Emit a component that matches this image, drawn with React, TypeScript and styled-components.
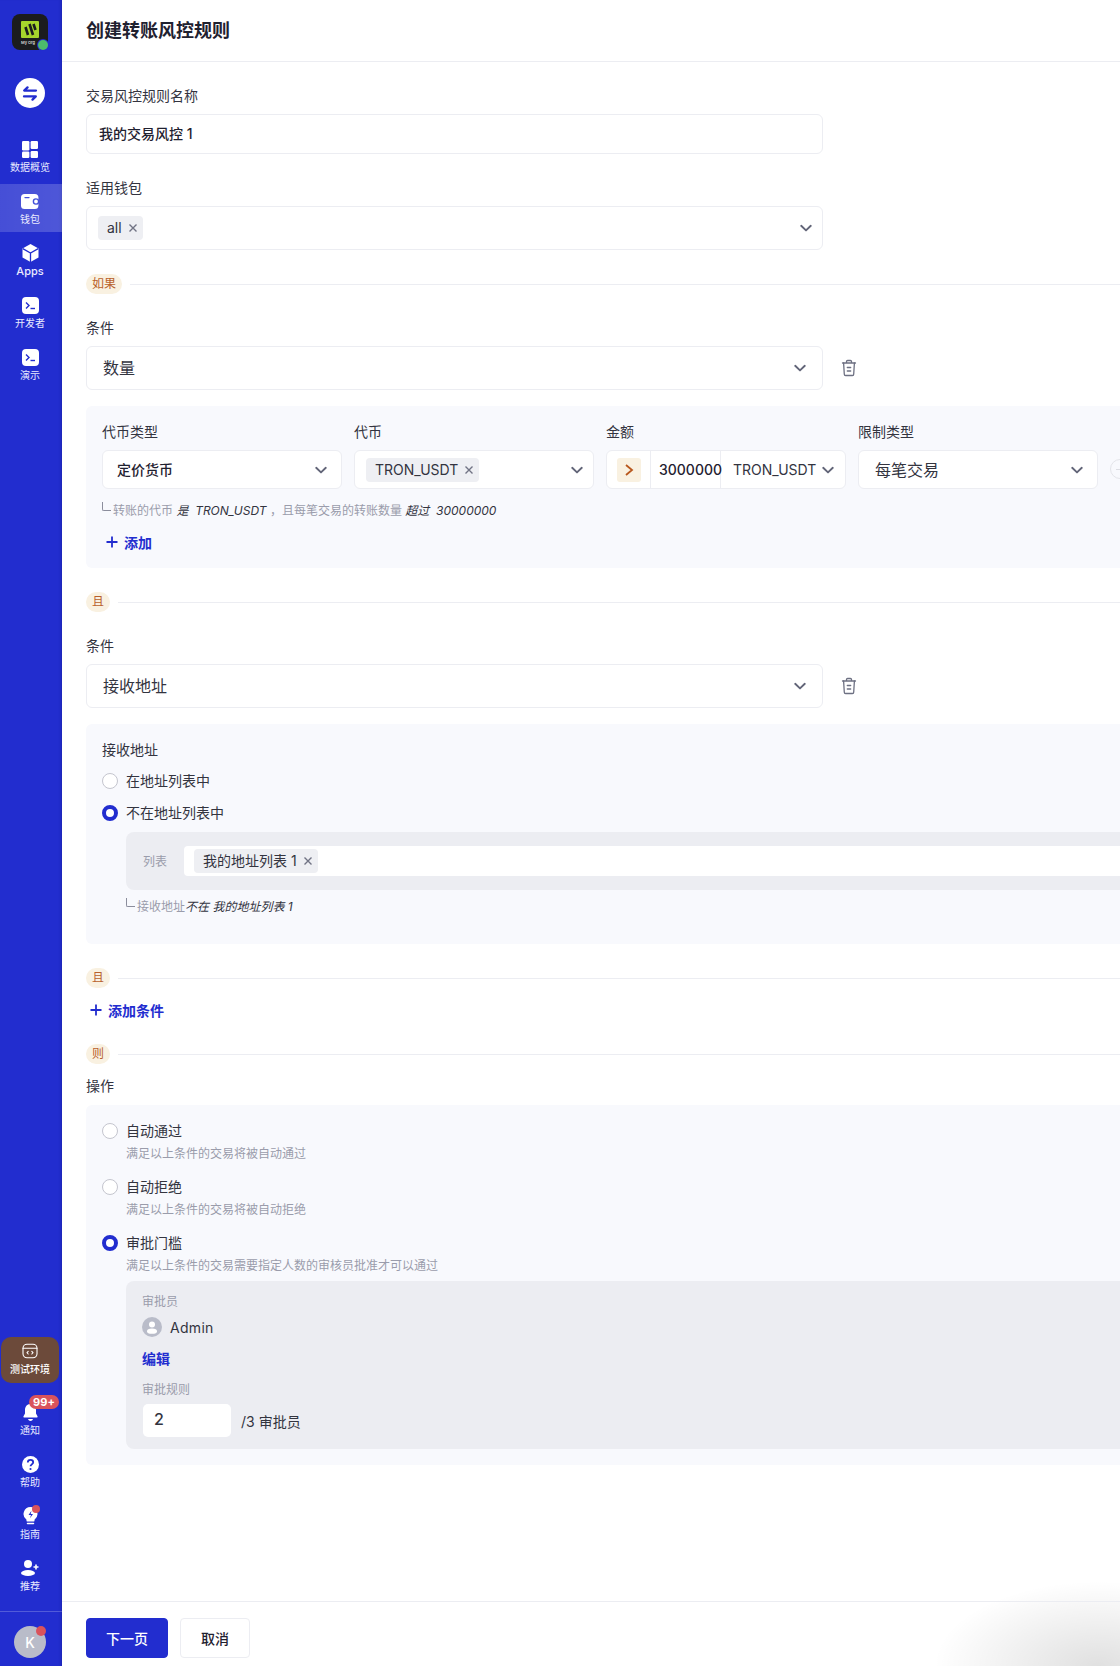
import React from "react";
import styled, { createGlobalStyle } from "styled-components";

const Global = createGlobalStyle`
  html, body { margin: 0; padding: 0; background: #fff; }
  body { font-family: Inter, "Noto Sans CJK SC", "Noto Sans", sans-serif; color: #1f2130; }
  * { box-sizing: border-box; }
`;

const BLUE = "#222dcf";

const Page = styled.div`
  display: flex;
  width: 1120px;
  height: 1666px;
  overflow: hidden;
`;
const Sidebar = styled.aside`
  width: 62px;
  flex-shrink: 0;
  height: 100%;
  background: ${BLUE};
  box-shadow: inset -3px 0 3px -2px rgba(10, 15, 90, 0.25);
  display: flex;
  flex-direction: column;
  align-items: center;
  padding-top: 14px;
  padding-bottom: 8px;
`;
const Logo = styled.div`
  position: relative;
  width: 36px;
  height: 36px;
  margin-right: 2px;
  border-radius: 8px;
  background: #1b1c1e;
  display: flex;
  flex-direction: column;
  align-items: center;
  padding-top: 7px;
`;
const LogoMark = styled.div`
  width: 18px;
  height: 17px;
  border-radius: 1px;
  background: #a6d52c;
  display: flex;
`;
const LogoText = styled.span`
  font-size: 4px;
  line-height: 6px;
  margin-top: 2px;
  margin-right: 4px;
  color: #d8d8d8;
  font-weight: 600;
  white-space: nowrap;
`;
const LogoDot = styled.span`
  position: absolute;
  right: 0;
  bottom: 0;
  width: 10px;
  height: 10px;
  border-radius: 50%;
  background: #4cbb6c;
  box-shadow: 0 0 0 1px ${BLUE};
`;
const SwapCircle = styled.div`
  width: 30px;
  height: 30px;
  margin: 28px 2px 24px 0;
  border-radius: 50%;
  background: #fff;
  display: flex;
  align-items: center;
  justify-content: center;
`;
const NavList = styled.nav`
  display: flex;
  flex-direction: column;
  gap: 4px;
  width: 100%;
`;
const NavItem = styled.div<{ $active?: boolean }>`
  width: 100%;
  height: 48px;
  display: flex;
  flex-direction: column;
  align-items: center;
  padding: 7px 2px 0 0;
  background: ${(p) =>
    p.$active ? "linear-gradient(90deg, rgba(255,255,255,.16), rgba(255,255,255,.2))" : "transparent"};
`;
const NavIcon = styled.span`
  position: relative;
  width: 20px;
  height: 20px;
  display: flex;
  align-items: center;
  justify-content: center;
`;
const NavLabel = styled.span<{ $latin?: boolean }>`
  font-size: ${(p) => (p.$latin ? "11px" : "10px")};
  line-height: 14px;
  margin-top: 1px;
  color: #e9eaff;
  font-weight: ${(p) => (p.$latin ? 500 : 400)};
  white-space: nowrap;
`;
const Spacer = styled.div`
  flex: 1;
`;
const TestBox = styled.div`
  width: 58px;
  height: 46px;
  margin-right: 2px;
  margin-bottom: 12px;
  border-radius: 10px;
  background: #6c4a3a;
  display: flex;
  flex-direction: column;
  align-items: center;
  padding-top: 4px;
`;
const TestLabel = styled.span`
  font-size: 10px;
  line-height: 14px;
  margin-top: 1px;
  color: #fff;
  font-weight: 500;
  white-space: nowrap;
`;
const CountBadge = styled.span`
  position: absolute;
  left: 9px;
  top: -7px;
  width: 30px;
  height: 14px;
  border-radius: 7px;
  background: #d9535c;
  color: #fff;
  font-size: 11px;
  line-height: 14px;
  font-weight: 700;
  text-align: center;
  white-space: nowrap;
`;
const RedDot = styled.span`
  position: absolute;
  right: 0;
  top: -1px;
  width: 8px;
  height: 8px;
  border-radius: 50%;
  background: #d9535c;
`;
const SideDivider = styled.div`
  width: 100%;
  height: 1px;
  background: rgba(255, 255, 255, 0.22);
  margin-top: 12px;
  margin-bottom: 14px;
`;
const UserAvatar = styled.div`
  position: relative;
  width: 32px;
  height: 32px;
  margin-right: 2px;
  border-radius: 50%;
  background: #b9bcc9;
  color: #fff;
  font-size: 14px;
  font-weight: 500;
  display: flex;
  align-items: center;
  justify-content: center;
`;
const UserDot = styled.span`
  position: absolute;
  right: 0;
  top: 0;
  width: 10px;
  height: 10px;
  border-radius: 50%;
  background: #d9535c;
`;

const Main = styled.main`
  flex: 1;
  min-width: 0;
  height: 100%;
  display: flex;
  flex-direction: column;
  background: radial-gradient(ellipse 165px 85px at 98% 100%, rgba(0, 0, 0, 0.12), rgba(0, 0, 0, 0) 100%), #fff;
`;
const Header = styled.header`
  height: 62px;
  flex-shrink: 0;
  border-bottom: 1px solid #ecedf2;
  padding: 0 24px 4px;
  display: flex;
  align-items: center;
  font-size: 18px;
  font-weight: 600;
`;
const Body = styled.div`
  flex: 1;
  overflow: hidden;
  padding: 23px 0 0 24px;
`;
const Form = styled.div`
  width: 1200px;
  display: flex;
  flex-direction: column;
`;
const Label = styled.div<{ $gap?: number; $after?: number }>`
  font-size: 14px;
  line-height: 22px;
  color: #33343f;
  margin-top: ${(p) => p.$gap ?? 0}px;
  margin-bottom: ${(p) => p.$after ?? 7}px;
`;
const FieldRow = styled.div`
  display: flex;
  align-items: center;
`;
const TextBox = styled.div`
  width: 737px;
  height: 40px;
  border: 1px solid #ecedf2;
  border-radius: 6px;
  background: #fff;
  padding: 0 12px 2px;
  display: flex;
  align-items: center;
  font-size: 14px;
  font-weight: 500;
`;
const Select = styled.div<{ $big?: boolean }>`
  position: relative;
  width: 737px;
  height: 44px;
  border: 1px solid #ecedf2;
  border-radius: 6px;
  background: #fff;
  padding: 0 40px ${(p) => (p.$big ? 2 : 0)}px ${(p) => (p.$big ? 16 : 11)}px;
  display: flex;
  align-items: center;
  font-size: 16px;
  color: #33343f;
  flex-shrink: 0;
`;
const Chevron = styled.svg<{ $right: number }>`
  position: absolute;
  right: ${(p) => p.$right}px;
  top: 50%;
  margin-top: -8px;
  width: 16px;
  height: 16px;
`;
const Chip = styled.span`
  display: inline-flex;
  align-items: center;
  gap: 6px;
  height: 24px;
  padding: 0 5px 0 9px;
  border-radius: 4px;
  background: #eeeff3;
  font-size: 14px;
  line-height: 24px;
  color: #33343f;
  white-space: nowrap;
`;
const TrashButton = styled.span`
  width: 16px;
  height: 18px;
  margin-left: 18px;
  display: flex;
`;
const RuleRow = styled.div<{ $top: number; $bottom: number }>`
  display: flex;
  align-items: center;
  gap: 8px;
  height: 20px;
  margin-top: ${(p) => p.$top}px;
  margin-bottom: ${(p) => p.$bottom}px;
`;
const RuleBadge = styled.span`
  min-width: 24px;
  height: 20px;
  padding: 0 6px;
  border-radius: 10px;
  background: #f9f1e1;
  color: #b8602b;
  font-size: 12px;
  line-height: 20px;
  text-align: center;
`;
const RuleLine = styled.span`
  flex: 1;
  height: 1px;
  background: #ecedf2;
`;
const Block = styled.section<{ $top: number; $h: number }>`
  margin-top: ${(p) => p.$top}px;
  min-height: ${(p) => p.$h}px;
  border-radius: 6px;
  background: #f8f9fd;
  padding: 15px 16px 0;
  display: flex;
  flex-direction: column;
`;
const Columns = styled.div`
  display: flex;
  gap: 12px;
  align-items: flex-start;
`;
const Column = styled.div`
  width: 240px;
  flex-shrink: 0;
`;
const ColumnSelect = styled(Select)<{ $large?: boolean }>`
  width: 100%;
  height: 39px;
  font-size: ${(p) => (p.$large ? 16 : 14)}px;
  padding-left: ${(p) => (p.$large ? 16 : 14)}px;
  padding-bottom: 2px;
`;
const ChipSelect = styled(Select)`
  width: 100%;
  height: 39px;
  font-size: 14px;
`;
const StrongValue = styled.span`
  font-weight: 500;
  color: #1f2130;
`;
const AmountBox = styled.div`
  width: 100%;
  height: 39px;
  border: 1px solid #ecedf2;
  border-radius: 6px;
  background: #fff;
  display: flex;
  align-items: stretch;
  font-size: 14px;
`;
const OpCell = styled.div`
  width: 44px;
  flex-shrink: 0;
  border-right: 1px solid #ecedf2;
  display: flex;
  align-items: center;
  justify-content: center;
`;
const OpTile = styled.span`
  width: 24px;
  height: 24px;
  border-radius: 3px;
  background: #f9f1e1;
  display: flex;
  align-items: center;
  justify-content: center;
`;
const AmountValue = styled.div`
  width: 70px;
  flex-shrink: 0;
  padding-left: 8px;
  border-right: 1px solid #ecedf2;
  line-height: 37px;
  font-weight: 500;
  white-space: nowrap;
`;
const UnitCell = styled.div`
  position: relative;
  flex: 1;
  padding-left: 12px;
  line-height: 37px;
  color: #33343f;
  white-space: nowrap;
`;
const MinusCircle = styled.span`
  width: 20px;
  height: 20px;
  margin-top: 38px;
  border-radius: 50%;
  border: 1px solid #e4e5ea;
  flex-shrink: 0;
  display: flex;
  align-items: center;
  justify-content: center;
  &::after {
    content: "";
    width: 8px;
    height: 1px;
    background: #dcdde3;
  }
`;
const Hint = styled.div<{ $top: number; $indent?: number }>`
  display: flex;
  align-items: center;
  font-size: 12px;
  line-height: 18px;
  color: #9a9cab;
  margin-top: ${(p) => p.$top}px;
  margin-left: ${(p) => p.$indent ?? 0}px;
  white-space: pre;
`;
const Elbow = styled.span`
  width: 9px;
  height: 9px;
  margin-right: 2px;
  margin-top: -9px;
  border-left: 1px solid #8b8d9c;
  border-bottom: 1px solid #8b8d9c;
  border-bottom-left-radius: 2px;
`;
const Em = styled.em`
  color: #33343f;
  font-style: italic;
`;
const AddLink = styled.div<{ $top: number; $bottom?: number }>`
  display: flex;
  align-items: center;
  gap: 6px;
  height: 22px;
  padding-bottom: 1px;
  margin-top: ${(p) => p.$top}px;
  margin-bottom: ${(p) => p.$bottom ?? 0}px;
  margin-left: 4px;
  color: ${BLUE};
  font-size: 14px;
  font-weight: 600;
`;
const RadioRow = styled.div<{ $top?: number }>`
  display: flex;
  align-items: center;
  gap: 8px;
  height: 22px;
  padding-bottom: 2px;
  margin-top: ${(p) => p.$top ?? 0}px;
  font-size: 14px;
  color: #33343f;
`;
const Radio = styled.span<{ $on?: boolean }>`
  width: 16px;
  height: 16px;
  border-radius: 50%;
  background: #fff;
  border: ${(p) => (p.$on ? `4.5px solid ${BLUE}` : "1px solid #c4c5ce")};
  flex-shrink: 0;
  margin-top: 1px;
`;
const OptionDesc = styled.div`
  font-size: 12px;
  line-height: 18px;
  color: #9a9cab;
  margin: 3px 0 13px 24px;
`;
const SubPanel = styled.div`
  margin-left: 24px;
  border-radius: 8px;
  background: #ecedf2;
`;
const ListPanel = styled(SubPanel)`
  margin-top: 8px;
  height: 58px;
  padding: 14px 0 14px 17px;
  display: flex;
  align-items: center;
  gap: 17px;
`;
const ListLabel = styled.span`
  font-size: 12px;
  color: #9a9cab;
  margin-bottom: 2px;
  white-space: nowrap;
`;
const ListInput = styled.div`
  flex: 1;
  height: 30px;
  border-radius: 4px;
  background: #fff;
  padding-left: 10px;
  display: flex;
  align-items: center;
`;
const ApprovalPanel = styled(SubPanel)`
  margin-top: -7px;
  height: 168px;
  padding: 12px 16px;
  display: flex;
  flex-direction: column;
`;
const MutedLabel = styled.div`
  font-size: 12px;
  line-height: 18px;
  color: #9a9cab;
`;
const ApproverRow = styled.div`
  display: flex;
  align-items: center;
  gap: 8px;
  height: 20px;
  margin-top: 6px;
  font-size: 14px;
  letter-spacing: 0.3px;
  color: #33343f;
`;
const EditLink = styled.div`
  height: 22px;
  line-height: 22px;
  margin-top: 11px;
  margin-bottom: 11px;
  color: ${BLUE};
  font-size: 14px;
  font-weight: 600;
`;
const CountRow = styled.div`
  display: flex;
  align-items: center;
  gap: 10px;
  margin-top: 5px;
  margin-left: 1px;
  font-size: 14px;
  color: #33343f;
`;
const CountInput = styled.div`
  width: 88px;
  height: 33px;
  border-radius: 5px;
  background: #fff;
  padding-left: 11px;
  font-size: 16px;
  font-weight: 500;
  line-height: 31px;
`;
const Footer = styled.footer`
  height: 65px;
  flex-shrink: 0;
  border-top: 1px solid #ecedf2;
  padding: 16px 24px 0;
  display: flex;
  gap: 12px;
  align-items: flex-start;
`;
const Button = styled.button<{ $primary?: boolean }>`
  height: 40px;
  width: ${(p) => (p.$primary ? 82 : 70)}px;
  border-radius: 4px;
  border: 1px solid ${(p) => (p.$primary ? BLUE : "#ecedf2")};
  background: ${(p) => (p.$primary ? BLUE : "#fff")};
  color: ${(p) => (p.$primary ? "#fff" : "#1f2130")};
  font-family: inherit;
  font-size: 14px;
  font-weight: 500;
  padding: 0;
`;

const ChevronIcon = ({ right = 8 }: { right?: number }) => (
  <Chevron $right={right} viewBox="0 0 16 16" fill="none" stroke="#626578" strokeWidth="1.9" strokeLinecap="round" strokeLinejoin="round">
    <path d="M3.2 5.8 8 10.4 12.8 5.8" />
  </Chevron>
);
const CloseIcon = () => (
  <svg width="10" height="10" viewBox="0 0 10 10" fill="none" stroke="#707384" strokeWidth="1.4">
    <path d="M1.5 1.5 8.5 8.5M8.5 1.5 1.5 8.5" />
  </svg>
);
const TrashIcon = () => (
  <svg width="16" height="18" viewBox="0 0 16 18" fill="none" stroke="#6d7082" strokeWidth="1.3" strokeLinecap="round" strokeLinejoin="round">
    <path d="M1.5 4h13M5.5 4V2.6c0-.6.5-1.1 1.1-1.1h2.8c.6 0 1.1.5 1.1 1.1V4" />
    <path d="M2.6 4l.7 11.2c0 .8.6 1.3 1.3 1.3h6.8c.7 0 1.3-.5 1.3-1.3L13.4 4" />
    <path d="M6.3 8.5h3.4M6.3 12h3.4" />
  </svg>
);
const PlusIcon = () => (
  <svg width="12" height="12" viewBox="0 0 12 12" fill="none" stroke={BLUE} strokeWidth="1.8">
    <path d="M6 .5v11M.5 6h11" />
  </svg>
);
const TerminalIcon = () => (
  <svg width="17" height="17" viewBox="0 0 17 17">
    <rect width="17" height="17" rx="4" fill="#fff" />
    <path d="M4 5.5 7 8.5 4 11.5" fill="none" stroke={BLUE} strokeWidth="1.4" />
    <path d="M8.5 11.5h4.5" stroke={BLUE} strokeWidth="1.4" />
  </svg>
);

const navTop = [
  {
    label: "数据概览",
    icon: (
      <svg width="16" height="17" viewBox="0 0 16 17" fill="#fff">
        <rect x="0" y="0" width="7.4" height="9.5" rx="1.2" />
        <rect x="0" y="10.5" width="7.4" height="6.5" rx="1.2" />
        <rect x="8.6" y="0" width="7.4" height="8" rx="1.2" />
        <rect x="8.6" y="10" width="7.4" height="7" rx="1.2" />
      </svg>
    ),
  },
  {
    label: "钱包",
    active: true,
    icon: (
      <svg width="18" height="15" viewBox="0 0 18 15">
        <rect width="17.4" height="15" rx="3.5" fill="#fff" />
        <path d="M4 3.6h4" stroke="#4350d9" strokeWidth="1.4" strokeLinecap="round" />
        <circle cx="15" cy="7.5" r="2.6" fill="#fff" stroke="#4350d9" strokeWidth="1.4" />
      </svg>
    ),
  },
  {
    label: "Apps",
    latin: true,
    icon: (
      <svg width="17" height="18" viewBox="0 0 17 18">
        <path d="M8.5 0 16.5 4.4V13.4L8.5 18 .5 13.4V4.4Z" fill="#fff" />
        <path d="M.8 4.6 8.5 9l7.7-4.4M8.5 9v9" fill="none" stroke={BLUE} strokeWidth="1.3" />
      </svg>
    ),
  },
  { label: "开发者", icon: <TerminalIcon /> },
  { label: "演示", icon: <TerminalIcon /> },
];

export default function App() {
  return (
    <Page>
      <Global />
      <Sidebar>
        <Logo>
          <LogoMark>
            <svg width="18" height="17" viewBox="0 0 18 17" fill="none" stroke="#1b1c1e" strokeWidth="2.6">
              <path d="M4.5 6 7 14M8.5 3 12 14M12.5 3 14.5 9" />
            </svg>
          </LogoMark>
          <LogoText>My Org</LogoText>
          <LogoDot />
        </Logo>
        <SwapCircle>
          <svg width="16" height="15" viewBox="0 0 16 15" fill="none" stroke={BLUE} strokeWidth="2.3" strokeLinecap="round" strokeLinejoin="round">
            <path d="M14 4.6H2.2L5.5 1.4M2 10.4h11.8L10.5 13.6" />
          </svg>
        </SwapCircle>
        <NavList>
          {navTop.map((n) => (
            <NavItem key={n.label} $active={n.active}>
              <NavIcon>{n.icon}</NavIcon>
              <NavLabel $latin={n.latin}>{n.label}</NavLabel>
            </NavItem>
          ))}
        </NavList>
        <Spacer />
        <TestBox>
          <NavIcon>
            <svg width="16" height="16" viewBox="0 0 16 16" fill="none" stroke="#fff" strokeWidth="1.1" strokeLinecap="round" strokeLinejoin="round">
              <rect x="1" y="1.2" width="14" height="13.6" rx="4" />
              <path d="M1 5.2h14M6.2 8.3 5 9.7l1.2 1.3M9.8 8.3 11 9.7 9.8 11" />
            </svg>
          </NavIcon>
          <TestLabel>测试环境</TestLabel>
        </TestBox>
        <NavList>
          <NavItem>
            <NavIcon>
              <svg width="15" height="17" viewBox="0 0 15 17" fill="#fff">
                <path d="M7.5 0C4 0 2 2.7 2 6v3.5L.5 12.2c-.3.6 0 1.3.8 1.3h12.4c.8 0 1.100-.7.800-1.300L13 9.500V6c0-3.300-2-6-5.500-6Z" />
                <path d="M5 15h5c-.4 1.200-1.400 2-2.500 2S5.400 16.200 5 15Z" />
              </svg>
              <CountBadge>99+</CountBadge>
            </NavIcon>
            <NavLabel>通知</NavLabel>
          </NavItem>
          <NavItem>
            <NavIcon>
              <svg width="17" height="17" viewBox="0 0 17 17">
                <circle cx="8.5" cy="8.5" r="8.5" fill="#fff" />
                <path d="M5.8 6.4c0-1.500 1.200-2.500 2.700-2.500s2.700 1 2.700 2.400c0 2-2.700 2.100-2.700 4" fill="none" stroke={BLUE} strokeWidth="1.8" />
                <circle cx="8.5" cy="13" r="1.1" fill={BLUE} />
              </svg>
            </NavIcon>
            <NavLabel>帮助</NavLabel>
          </NavItem>
          <NavItem>
            <NavIcon>
              <svg width="15" height="18" viewBox="0 0 15 18">
                <path d="M7.5 0a7 7 0 0 0-4 12.700V14c0 .3.300.5.500.5h7c.3 0 .5-.2.500-.5v-1.300A7 7 0 0 0 7.500 0Z" fill="#fff" />
                <path d="M8.5 3.800 5.500 8h2.500l-1 3.200L10 7H7.700Z" fill={BLUE} />
                <path d="M4.500 16.500h6" stroke="#fff" strokeWidth="1.5" strokeLinecap="round" />
              </svg>
              <RedDot />
            </NavIcon>
            <NavLabel>指南</NavLabel>
          </NavItem>
          <NavItem>
            <NavIcon>
              <svg width="19" height="16" viewBox="0 0 19 16" fill="#fff">
                <circle cx="7" cy="4" r="4" />
                <ellipse cx="7" cy="13" rx="7" ry="3" />
                <path d="M15 4.500v5M12.500 7h5" stroke="#fff" strokeWidth="1.6" />
              </svg>
            </NavIcon>
            <NavLabel>推荐</NavLabel>
          </NavItem>
        </NavList>
        <SideDivider />
        <UserAvatar>
          K
          <UserDot />
        </UserAvatar>
      </Sidebar>

      <Main>
        <Header>创建转账风控规则</Header>
        <Body>
          <Form>
            <Label>交易风控规则名称</Label>
            <TextBox>我的交易风控 1</TextBox>

            <Label $gap={23}>适用钱包</Label>
            <Select>
              <Chip>
                all
                <CloseIcon />
              </Chip>
              <ChevronIcon />
            </Select>

            <RuleRow $top={24} $bottom={23}>
              <RuleBadge>如果</RuleBadge>
              <RuleLine />
            </RuleRow>

            <Label>条件</Label>
            <FieldRow>
              <Select $big>
                数量
                <ChevronIcon right={14} />
              </Select>
              <TrashButton>
                <TrashIcon />
              </TrashButton>
            </FieldRow>

            <Block $top={16} $h={162}>
              <Columns>
                <Column>
                  <Label>代币类型</Label>
                  <ColumnSelect>
                    <StrongValue>定价货币</StrongValue>
                    <ChevronIcon right={12} />
                  </ColumnSelect>
                </Column>
                <Column>
                  <Label>代币</Label>
                  <ChipSelect>
                    <Chip>
                      TRON_USDT
                      <CloseIcon />
                    </Chip>
                    <ChevronIcon />
                  </ChipSelect>
                </Column>
                <Column>
                  <Label>金额</Label>
                  <AmountBox>
                    <OpCell>
                      <OpTile>
                        <svg width="10" height="14" viewBox="0 0 10 14" fill="none" stroke="#b8571d" strokeWidth="1.8">
                          <path d="M2 2 8 7 2 12" />
                        </svg>
                      </OpTile>
                    </OpCell>
                    <AmountValue>3000000</AmountValue>
                    <UnitCell>
                      TRON_USDT
                      <ChevronIcon right={9} />
                    </UnitCell>
                  </AmountBox>
                </Column>
                <Column>
                  <Label>限制类型</Label>
                  <ColumnSelect $large>
                    每笔交易
                    <ChevronIcon right={12} />
                  </ColumnSelect>
                </Column>
                <MinusCircle />
              </Columns>
              <Hint $top={13}>
                <Elbow />
                转账的代币 <Em>是  TRON_USDT </Em>，且每笔交易的转账数量 <Em>超过  30000000</Em>
              </Hint>
              <AddLink $top={11}>
                <PlusIcon />
                添加
              </AddLink>
            </Block>

            <RuleRow $top={24} $bottom={23}>
              <RuleBadge>且</RuleBadge>
              <RuleLine />
            </RuleRow>

            <Label>条件</Label>
            <FieldRow>
              <Select $big>
                接收地址
                <ChevronIcon right={14} />
              </Select>
              <TrashButton>
                <TrashIcon />
              </TrashButton>
            </FieldRow>

            <Block $top={16} $h={220}>
              <Label $after={9}>接收地址</Label>
              <RadioRow>
                <Radio />
                在地址列表中
              </RadioRow>
              <RadioRow $top={10}>
                <Radio $on />
                不在地址列表中
              </RadioRow>
              <ListPanel>
                <ListLabel>列表</ListLabel>
                <ListInput>
                  <Chip>
                    我的地址列表 1
                    <CloseIcon />
                  </Chip>
                </ListInput>
              </ListPanel>
              <Hint $top={8} $indent={24}>
                <Elbow />
                接收地址<Em>不在 我的地址列表 1</Em>
              </Hint>
            </Block>

            <RuleRow $top={24} $bottom={11}>
              <RuleBadge>且</RuleBadge>
              <RuleLine />
            </RuleRow>

            <AddLink $top={0} $bottom={23}>
              <PlusIcon />
              添加条件
            </AddLink>

            <RuleRow $top={0} $bottom={11}>
              <RuleBadge>则</RuleBadge>
              <RuleLine />
            </RuleRow>

            <Label $after={8}>操作</Label>
            <Block $top={0} $h={360}>
              <RadioRow>
                <Radio />
                自动通过
              </RadioRow>
              <OptionDesc>满足以上条件的交易将被自动通过</OptionDesc>
              <RadioRow>
                <Radio />
                自动拒绝
              </RadioRow>
              <OptionDesc>满足以上条件的交易将被自动拒绝</OptionDesc>
              <RadioRow>
                <Radio $on />
                审批门槛
              </RadioRow>
              <OptionDesc>满足以上条件的交易需要指定人数的审核员批准才可以通过</OptionDesc>
              <ApprovalPanel>
                <MutedLabel>审批员</MutedLabel>
                <ApproverRow>
                  <svg width="20" height="20" viewBox="0 0 20 20">
                    <circle cx="10" cy="10" r="10" fill="#b9bcc9" />
                    <circle cx="10" cy="7.5" r="3" fill="#fff" />
                    <ellipse cx="10" cy="14.2" rx="5" ry="2.6" fill="#fff" />
                  </svg>
                  Admin
                </ApproverRow>
                <EditLink>编辑</EditLink>
                <MutedLabel>审批规则</MutedLabel>
                <CountRow>
                  <CountInput>2</CountInput>
                  /3 审批员
                </CountRow>
              </ApprovalPanel>
            </Block>
          </Form>
        </Body>
        <Footer>
          <Button $primary>下一页</Button>
          <Button>取消</Button>
        </Footer>
      </Main>
    </Page>
  );
}
